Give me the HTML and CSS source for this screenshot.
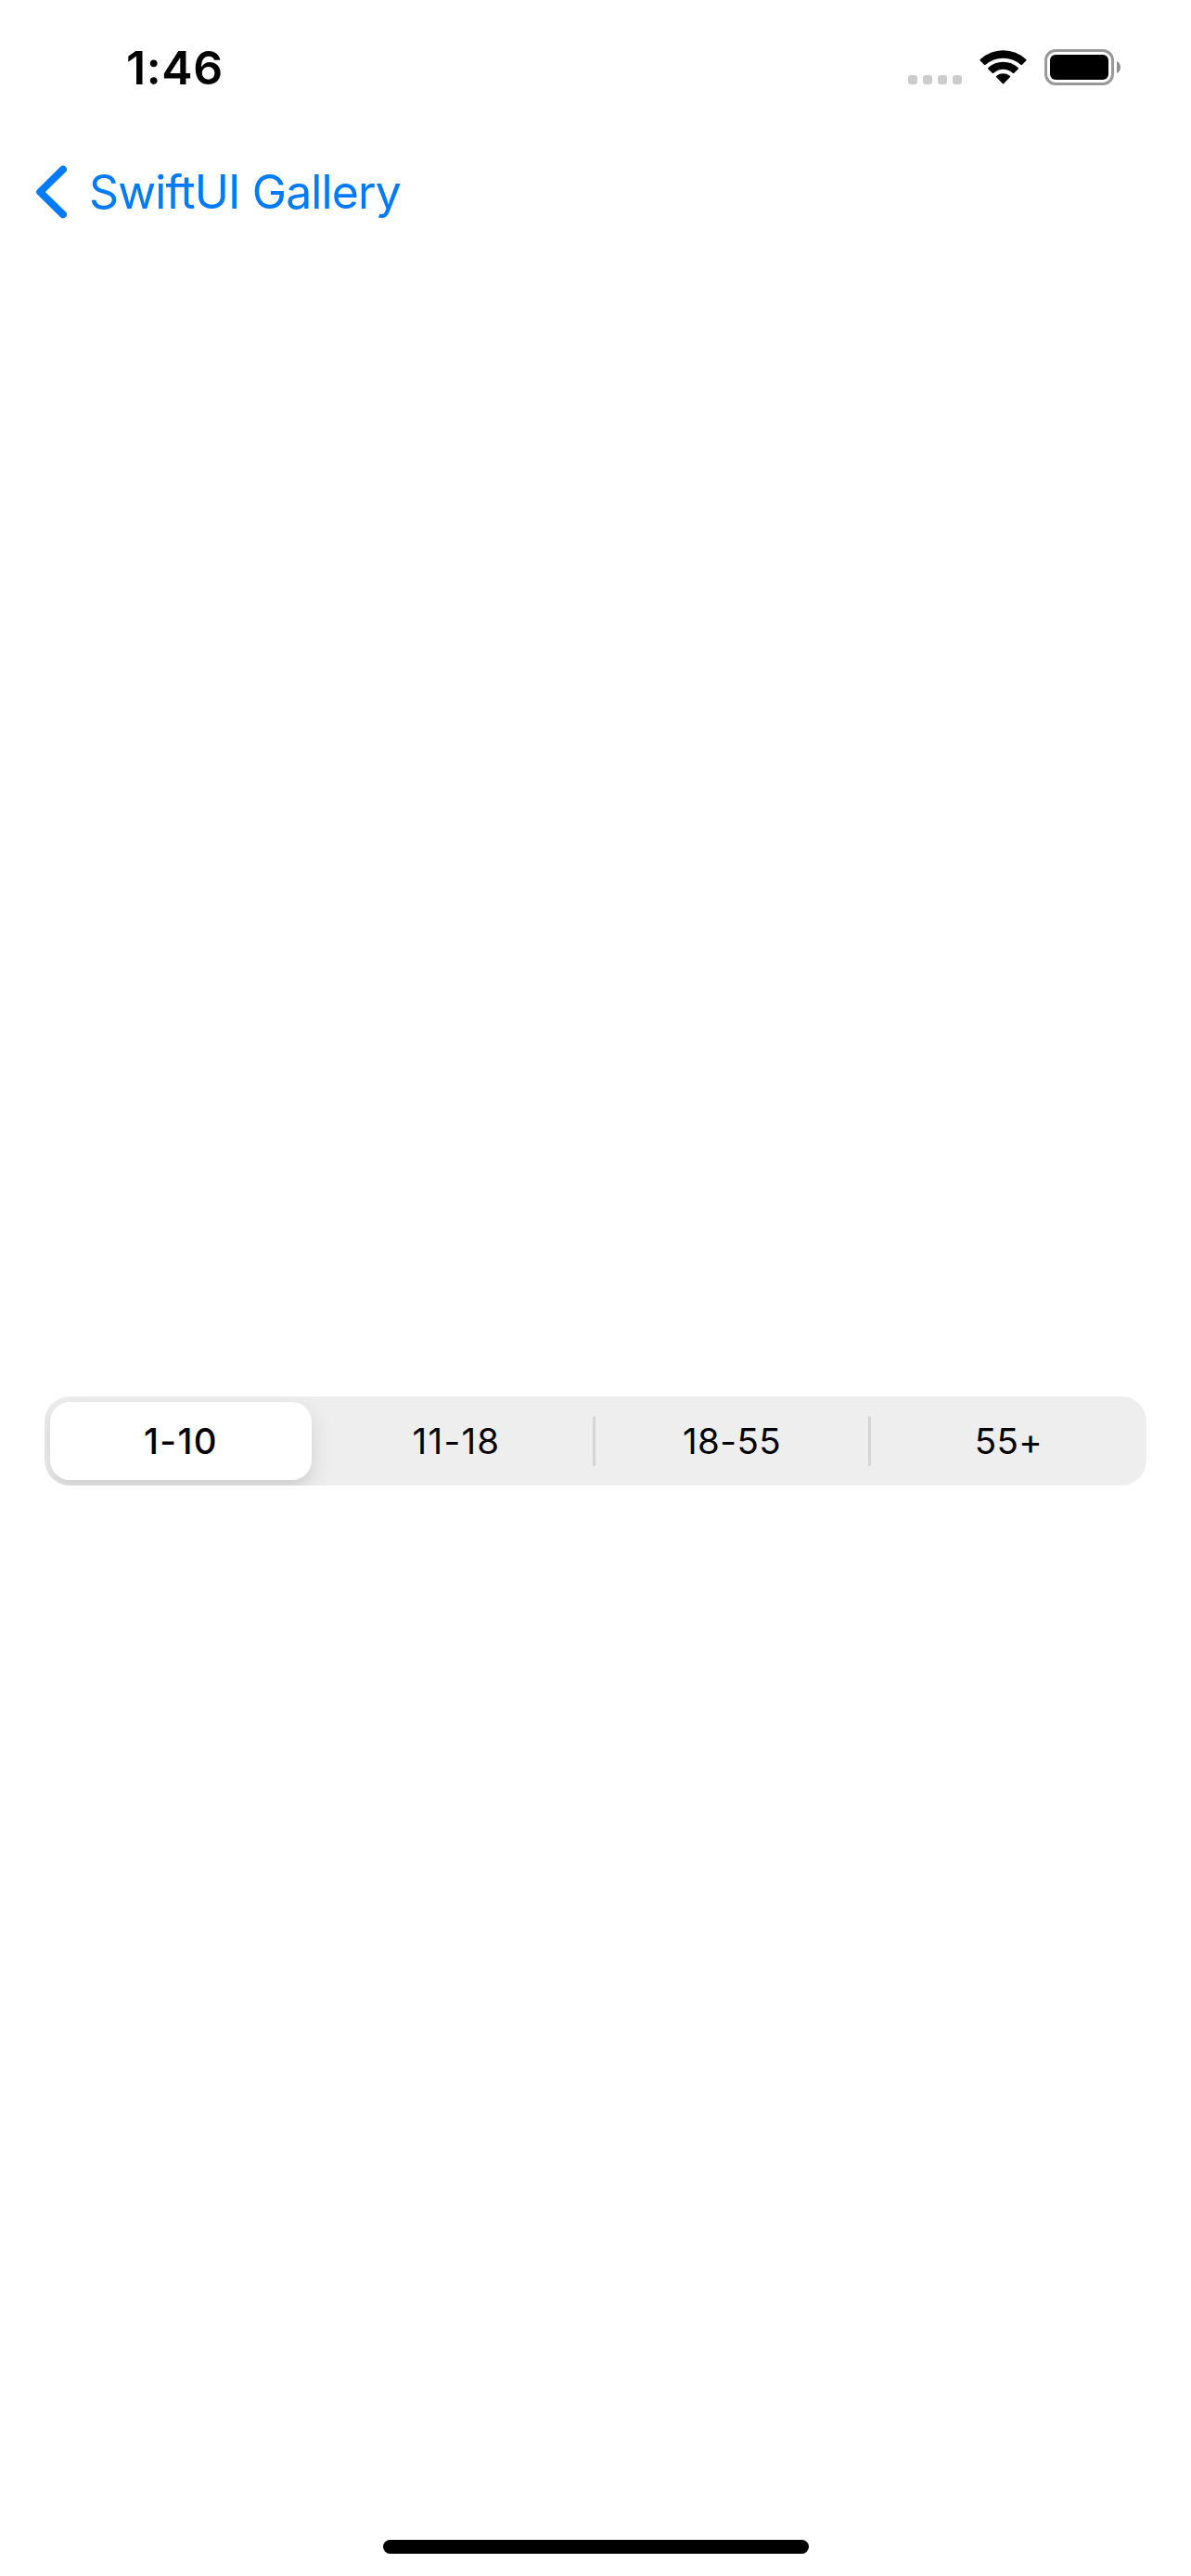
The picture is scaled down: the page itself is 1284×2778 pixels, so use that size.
FILE: index.html
```html
<!DOCTYPE html>
<html lang="en">
<head>
<meta charset="utf-8">
<title>SwiftUI Gallery</title>
<link rel="stylesheet" href="styles.css">
</head>
<body>
<div class="screen">
  <header class="status">
    <span class="time">1:46</span>
    <div class="indicators">
      <div class="signal"><i class="dot"></i><i class="dot"></i><i class="dot"></i><i class="dot"></i></div>
      <svg class="wifi" width="51" height="38" viewBox="0 0 51 38">
        <path d="M.8 10A36 36 0 0 1 50.2 10Q51 10.8 50.2 11.6L46 15.8Q45.2 16.5 44.4 15.8A28.5 28.5 0 0 0 6.6 15.8Q5.8 16.5 5 15.8L.8 11.6Q0 10.8 .8 10Z"/>
        <path d="M9.4 19A23.7 23.7 0 0 1 41.6 19Q42.4 19.8 41.6 20.6L37.3 24.7Q36.5 25.4 35.7 24.7A15.5 15.5 0 0 0 15.3 24.7Q14.5 25.4 13.7 24.7L9.4 20.6Q8.6 19.8 9.4 19Z"/>
        <path d="M18.4 27.8A11.6 11.6 0 0 1 32.6 27.8Q33.5 28.7 32.6 29.5L26.2 36.1Q25.5 36.9 24.8 36.1L18.4 29.5Q17.5 28.7 18.4 27.8Z"/>
      </svg>
      <svg class="battery" width="82" height="39" viewBox="0 0 82 39">
        <rect x="1.5" y="1.5" width="72" height="36" rx="10.5" fill="none" stroke="#999" stroke-width="3"/>
        <rect x="6" y="6" width="63" height="27" rx="6"/>
        <path d="M78 13Q82 15 82 19.5T78 26Z" fill="#8e8e8e"/>
      </svg>
    </div>
  </header>
  <nav class="nav">
    <svg class="chevron" width="34" height="58" viewBox="0 0 34 58">
      <path d="M30 4.7 5.2 29 30 53.3" fill="none" stroke="#007aff" stroke-width="8" stroke-linecap="round" stroke-linejoin="round"/>
    </svg>
    <a class="back">SwiftUI Gallery</a>
  </nav>
  <main class="content">
    <div class="segments">
      <div class="segment selected">1-10</div>
      <div class="segment divided wide">11-18</div>
      <div class="segment divided">18-55</div>
      <div class="segment">55+</div>
    </div>
  </main>
  <footer class="footer"><div class="home"></div></footer>
</div>
</body>
</html>
```
FILE: styles.css
```css
body {
  margin: 0;
  background: #fff;
  color: #000;
  font-family: Inter, "Liberation Sans", sans-serif;
}
.screen {
  width: 1284px;
  height: 2778px;
  display: flex;
  flex-direction: column;
  overflow: hidden;
}
.status {
  height: 146px;
  box-sizing: border-box;
  padding: 43px 76px 0 136px;
  display: flex;
  justify-content: space-between;
  align-items: flex-start;
}
.time {
  font-size: 50px;
  font-weight: 600;
  line-height: 60px;
  letter-spacing: 0.6px;
}
.indicators {
  display: flex;
  padding-top: 10px;
}
.signal {
  display: flex;
  gap: 6px;
  padding-top: 28px;
  margin-right: 19px;
}
.dot {
  width: 10px;
  height: 10px;
  border-radius: 3px;
  background: #ccc;
}
.wifi {
  margin: 1px 19px 0 0;
}
.nav {
  height: 122px;
  display: flex;
  align-items: center;
  padding-left: 38px;
  gap: 24px;
}
.back {
  color: #007aff;
  font-size: 50px;
  line-height: 60px;
  letter-spacing: -0.9px;
}
.content {
  padding: 1238px 48px 0;
  flex: 1;
}
.segments {
  display: grid;
  grid-template-columns: repeat(4, 297px);
  height: 96px;
  border-radius: 27px;
  background: #eee;
  overflow: hidden;
}
.segment {
  display: flex;
  align-items: center;
  justify-content: center;
  font-size: 38.5px;
  letter-spacing: 0.4px;
  line-height: 46px;
}
.selected {
  margin: 6px 9px 6px 6px;
  border-radius: 21px;
  background: #fff;
  font-weight: 500;
  letter-spacing: 1.3px;
  box-shadow: 0 9px 24px rgba(0, 0, 0, .12), 0 9px 3px rgba(0, 0, 0, .02);
}
.wide {
  letter-spacing: 1.3px;
}
.divided::after {
  content: "";
  width: 3px;
  height: 54px;
  border-radius: 1.5px;
  background: #d5d5d5;
  margin-left: auto;
}
.divided::before {
  content: "";
  width: 0;
  margin-right: auto;
}
.footer {
  display: flex;
  justify-content: center;
  padding-bottom: 24px;
}
.home {
  width: 459px;
  height: 15px;
  border-radius: 8px;
  background: #000;
}
```
